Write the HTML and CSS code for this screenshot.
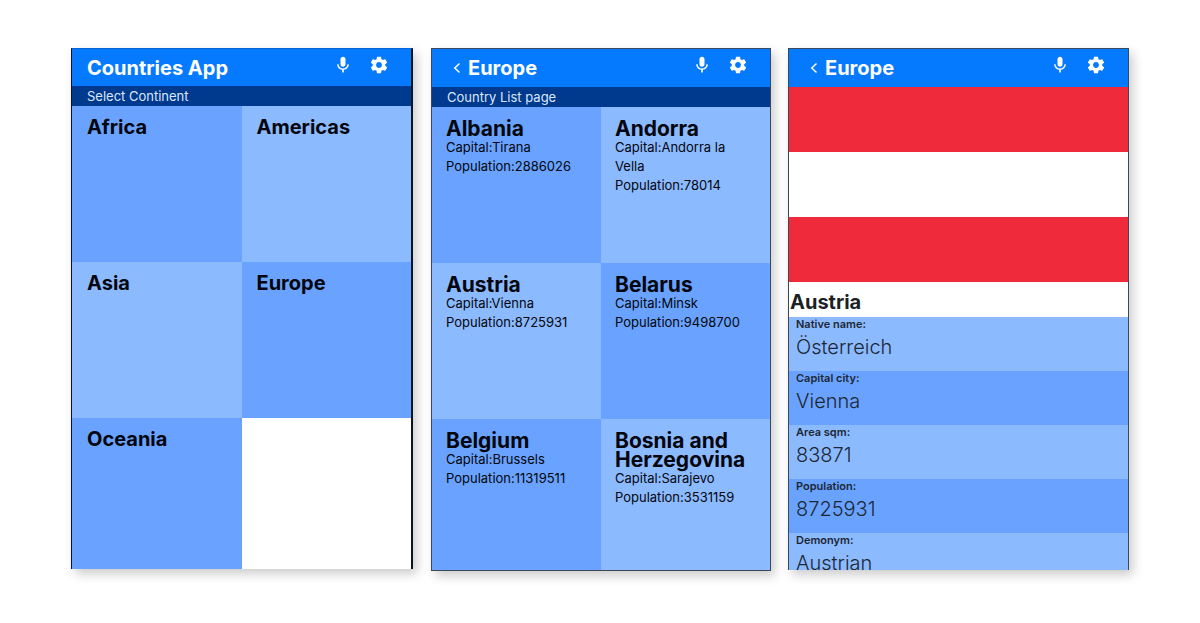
FILE: index.html
```html
<!DOCTYPE html>
<html lang="en">
<head>
<meta charset="utf-8">
<meta name="viewport" content="width=device-width, initial-scale=1">
<title>Countries App</title>
<link rel="stylesheet" href="styles.css">
</head>
<body>
<svg class="sprite" aria-hidden="true">
  <symbol id="mic" viewBox="0 0 24 24"><path d="M12 14c1.66 0 3-1.34 3-3V5c0-1.66-1.34-3-3-3S9 3.340 9 5v6c0 1.660 1.340 3 3 3zm5.300-3c0 3-2.540 5.100-5.300 5.100S6.700 14 6.700 11H5c0 3.410 2.720 6.230 6 6.720V21h2v-3.280c3.280-.480 6-3.300 6-6.720h-1.700z"/></symbol>
  <symbol id="gear" viewBox="0 0 24 24"><path d="M19.430 12.980c.04-.32.07-.64.07-.98s-.03-.66-.07-.98l2.110-1.650c.19-.15.240-.42.120-.64l-2-3.460c-.12-.22-.39-.3-.61-.22l-2.490 1c-.52-.4-1.080-.73-1.690-.98l-.38-2.650C14.460 2.180 14.250 2 14 2h-4c-.25 0-.46.180-.49.420l-.38 2.650c-.61.250-1.170.590-1.690.980l-2.490-1c-.23-.09-.49 0-.61.220l-2 3.460c-.13.220-.07.490.12.640l2.110 1.650c-.04.320-.07.650-.07.980s.03.660.07.980l-2.110 1.650c-.19.150-.24.420-.12.640l2 3.460c.12.220.39.300.61.220l2.490-1c.52.400 1.080.730 1.690.980l.38 2.650c.03.240.24.420.49.420h4c.25 0 .46-.18.49-.42l.38-2.650c.61-.25 1.170-.59 1.690-.98l2.490 1c.23.09.49 0 .61-.22l2-3.460c.12-.22.07-.49-.12-.64l-2.110-1.650zM12 15.500c-1.930 0-3.500-1.570-3.500-3.500s1.570-3.500 3.500-3.500 3.500 1.570 3.500 3.500-1.570 3.500-3.500 3.500z"/></symbol>
</svg>
<main class="screens">
  <section class="phone phone-home">
    <header class="bar">
      <h1 class="title">Countries App</h1>
      <button class="icon" aria-label="Voice search"><svg><use href="#mic"/></svg></button>
      <button class="icon" aria-label="Settings"><svg><use href="#gear"/></svg></button>
    </header>
    <p class="subtitle">Select Continent</p>
    <div class="tiles">
      <a class="tile" href="#"><h2>Africa</h2></a>
      <a class="tile light" href="#"><h2>Americas</h2></a>
      <a class="tile light" href="#"><h2>Asia</h2></a>
      <a class="tile" href="#"><h2>Europe</h2></a>
      <a class="tile" href="#"><h2>Oceania</h2></a>
    </div>
  </section>

  <section class="phone phone-list">
    <header class="bar">
      <button class="back" aria-label="Back"><svg viewBox="0 0 8 12"><path d="M6.500 1.500 1.800 6l4.700 4.500"/></svg></button>
      <h1 class="title">Europe</h1>
      <button class="icon" aria-label="Voice search"><svg><use href="#mic"/></svg></button>
      <button class="icon" aria-label="Settings"><svg><use href="#gear"/></svg></button>
    </header>
    <p class="subtitle">Country List page</p>
    <div class="tiles">
      <a class="tile" href="#"><h2>Albania</h2><p>Capital:Tirana</p><p>Population:2886026</p></a>
      <a class="tile light" href="#"><h2>Andorra</h2><p>Capital:Andorra la Vella</p><p>Population:78014</p></a>
      <a class="tile light" href="#"><h2>Austria</h2><p>Capital:Vienna</p><p>Population:8725931</p></a>
      <a class="tile" href="#"><h2>Belarus</h2><p>Capital:Minsk</p><p>Population:9498700</p></a>
      <a class="tile" href="#"><h2>Belgium</h2><p>Capital:Brussels</p><p>Population:11319511</p></a>
      <a class="tile light" href="#"><h2>Bosnia and Herzegovina</h2><p>Capital:Sarajevo</p><p>Population:3531159</p></a>
    </div>
  </section>

  <section class="phone phone-detail">
    <header class="bar">
      <button class="back" aria-label="Back"><svg viewBox="0 0 8 12"><path d="M6.500 1.500 1.800 6l4.700 4.500"/></svg></button>
      <h1 class="title">Europe</h1>
      <button class="icon" aria-label="Voice search"><svg><use href="#mic"/></svg></button>
      <button class="icon" aria-label="Settings"><svg><use href="#gear"/></svg></button>
    </header>
    <div class="flag" role="img" aria-label="Flag of Austria"></div>
    <h2 class="country">Austria</h2>
    <dl class="facts">
      <div class="fact"><dt>Native name:</dt><dd>Österreich</dd></div>
      <div class="fact"><dt>Capital city:</dt><dd>Vienna</dd></div>
      <div class="fact"><dt>Area sqm:</dt><dd>83871</dd></div>
      <div class="fact"><dt>Population:</dt><dd>8725931</dd></div>
      <div class="fact"><dt>Demonym:</dt><dd>Austrian</dd></div>
    </dl>
  </section>
</main>
</body>
</html>
```

FILE: styles.css
```css
* { box-sizing: border-box; }

body,
h1,
h2,
p,
dl,
dd { margin: 0; }

body {
  background: #fff;
  color: #03060c;
  font-family: Inter, "Liberation Sans", sans-serif;
}

button {
  padding: 0;
  border: 0;
  background: none;
  color: inherit;
}

svg { display: block; fill: currentColor; }

.sprite { display: none; }

.screens {
  display: grid;
  grid-template-columns: 343fr 340fr 341fr;
  grid-template-rows: minmax(0, 1fr);
  gap: 17px;
  height: 100vh;
  padding: 48px 71px 52px;
}

.phone {
  overflow: hidden;
  border: 1px solid #3c4858;
  box-shadow: 4px 5px 10px rgba(0, 0, 0, 0.2);
}

.phone-home {
  margin: 0 1px 2px 0;
  border-color: #0b1420;
  border-width: 0 2px 0 1px;
  border-top: 1px solid #0566cf;
}

.phone-detail { border-bottom: 0; margin-bottom: 1px; }

.bar {
  display: flex;
  align-items: center;
  height: 38px;
  padding: 0 22px 0 15px;
  background: #057aff;
  color: #fff;
}

.phone-home .bar { height: 37px; }

.title {
  flex: 1;
  font-size: 20px;
  line-height: 24px;
  font-weight: 700;
}

.back {
  width: 21px;
  padding-left: 6px;
}

.back svg {
  width: 8px;
  height: 12px;
  fill: none;
  stroke: currentColor;
  stroke-width: 1.500;
}

.icon {
  margin: 0 0 6px 16px;
}

.icon svg {
  width: 20px;
  height: 20px;
}

.subtitle {
  padding: 0 15px;
  background: #003a8e;
  color: #dce8fa;
  font-size: 13px;
  line-height: 20px;
}

.tiles {
  display: grid;
  grid-template-columns: repeat(2, minmax(0, 1fr));
  grid-auto-rows: 156px;
}

.tile {
  padding: 12px 15px;
  background: #69a3ff;
  color: inherit;
  text-decoration: none;
}

.tile.light,
.fact:nth-child(odd) { background: #8cbaff; }

.tile h2 {
  font-size: 20px;
  line-height: 19px;
  font-weight: 700;
}

.phone-list .tile {
  padding-left: 14px;
  padding-right: 8px;
}

.phone-list .tile h2 { font-size: 21px; }

.tile p {
  padding-right: 20px;
  font-size: 13px;
  line-height: 19px;
}

.flag {
  height: 195px;
  background: linear-gradient(#ef2b3b 33.330%, #fff 33.330% 66.660%, #ef2b3b 66.660%);
}

.country {
  padding: 8px 0 3px 1px;
  color: #1c1f24;
  font-size: 20px;
  line-height: 24px;
}

.fact {
  height: 54px;
  padding: 0 7px;
  background: #69a3ff;
  color: #1d2733;
}

.fact dt {
  font-size: 11px;
  line-height: 15px;
  font-weight: 600;
}

.fact dd {
  font-size: 20px;
  line-height: 30px;
  font-weight: 300;
}
```
